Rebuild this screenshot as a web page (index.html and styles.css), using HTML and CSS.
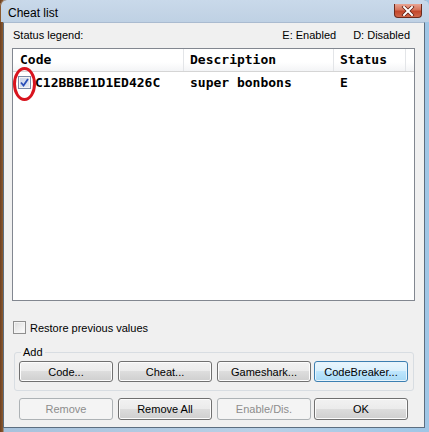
FILE: index.html
```html
<!DOCTYPE html>
<html>
<head>
<meta charset="utf-8">
<link rel="stylesheet" href="styles.css">
</head>
<body>
<div class="window">
  <div class="titlebar">
    <span class="title">Cheat list</span>
    <span class="close">
      <svg width="14" height="10" viewBox="0 0 14 10">
        <path d="M3 1 L11 9 M11 1 L3 9" stroke="#5a1a10" stroke-width="3.4" stroke-linecap="square"/>
        <path d="M3 1 L11 9 M11 1 L3 9" stroke="#ffffff" stroke-width="2" stroke-linecap="square"/>
      </svg>
    </span>
  </div>
  <div class="client">
    <div class="legend">
      <span>Status legend:</span>
      <span class="legend-right"><span>E: Enabled</span><span>D: Disabled</span></span>
    </div>
    <div class="list">
      <div class="list-head">
        <div class="col col-code">Code</div>
        <div class="col col-desc">Description</div>
        <div class="col col-status">Status</div>
        <div class="col col-rest"></div>
      </div>
      <div class="list-row">
        <div class="cell cell-code"><span class="cb checked"><svg width="9" height="9" viewBox="0 0 9 9"><path d="M1 4.5 L3.5 7.5 L8 1" fill="none" stroke="#2a4fb8" stroke-width="1.8"/></svg></span><span>C12BBBE1D1ED426C</span></div>
        <div class="cell cell-desc">super bonbons</div>
        <div class="cell cell-status">E</div>
      </div>
      <div class="mark"></div>
    </div>
    <label class="restore"><span class="cb"></span><span>Restore previous values</span></label>
    <fieldset class="group">
      <legend>Add</legend>
      <div class="btn-row">
        <button class="btn">Code...</button>
        <button class="btn">Cheat...</button>
        <button class="btn">Gameshark...</button>
        <button class="btn btn-focus">CodeBreaker...</button>
      </div>
    </fieldset>
    <div class="btn-row bottom-row">
      <button class="btn" disabled>Remove</button>
      <button class="btn">Remove All</button>
      <button class="btn" disabled>Enable/Dis.</button>
      <button class="btn">OK</button>
    </div>
  </div>
</div>
</body>
</html>
```

FILE: styles.css
```css
html, body {
  margin: 0;
  padding: 0;
  background: #ffffff;
}

.window {
  width: 429px;
  height: 432px;
  box-sizing: border-box;
  display: flex;
  flex-direction: column;
  background: linear-gradient(to right, #6e4020 0px, #8a5a30 3px, #a7c2dc 4px, #b9d0e6 60%, #9fc6e6 100%);
  font-family: "Liberation Sans", Arial, sans-serif;
  color: #000;
}

.titlebar {
  height: 22px;
  display: flex;
  align-items: flex-start;
  background: linear-gradient(to bottom, #c9d9ea 0%, #c3d4e6 60%, #bfd1e4 100%);
  border-radius: 6px 6px 0 0;
  box-shadow: inset 1px 0 0 #8a5a30;
}

.title {
  font-size: 12px;
  padding: 6px 0 0 8px;
  line-height: 14px;
}

.close {
  margin-left: auto;
  margin-right: 7px;
  margin-top: 4px;
  width: 28px;
  height: 14px;
  box-sizing: border-box;
  border: 1px solid #6b2a1c;
  border-top: none;
  border-radius: 0 0 4px 4px;
  background: linear-gradient(to bottom, #e8a493 0%, #d6735b 45%, #c2462a 55%, #d0674a 100%);
  display: flex;
  align-items: center;
  justify-content: center;
}

.client {
  flex: 1;
  margin: 0 4px 4px 3px;
  background: #f0f0f0;
  border: 1px solid #5c6e80;
  border-top: 1px solid #aabbd0;
  display: flex;
  flex-direction: column;
  font-size: 11px;
}

.legend {
  display: flex;
  justify-content: space-between;
  margin-top: 5px;
  padding: 0 14px 0 9px;
  height: 14px;
  line-height: 14px;
}

.legend-right {
  display: flex;
  gap: 17px;
}

.list {
  position: relative;
  margin: 6px 9px 0 8px;
  height: 253px;
  box-sizing: border-box;
  background: #ffffff;
  border: 1px solid #828790;
  font-family: "DejaVu Sans Mono", "Liberation Mono", monospace;
  font-weight: bold;
  font-size: 13px;
}

.list-head {
  display: flex;
  height: 22px;
  border-bottom: 1px solid #d5d5d5;
  background: linear-gradient(to bottom, #ffffff 0%, #ffffff 60%, #f3f4f6 100%);
}

.col {
  line-height: 22px;
  box-sizing: border-box;
  border-right: 1px solid #e3e5e8;
}

.col-code { width: 171px; padding-left: 7px; }
.col-desc { width: 150px; padding-left: 6px; }
.col-status { width: 72px; padding-left: 6px; }
.col-rest { flex: 1; border-right: none; }

.list-row {
  display: flex;
  height: 21px;
  align-items: center;
}

.cell { box-sizing: border-box; white-space: nowrap; }
.cell-code {
  width: 171px;
  padding-left: 5px;
  display: flex;
  align-items: center;
  gap: 4px;
}
.cell-desc { width: 150px; padding-left: 6px; }
.cell-status { padding-left: 6px; }

.cb {
  width: 13px;
  height: 13px;
  box-sizing: border-box;
  border: 1px solid #8f8f8f;
  background: linear-gradient(135deg, #dcdcdc 0%, #f4f4f4 70%, #ffffff 100%);
  box-shadow: inset 0 0 0 1px #f4f4f4;
  display: inline-flex;
  align-items: center;
  justify-content: center;
  flex: none;
}

.cb.checked {
  border-color: #7a8aa5;
  background: linear-gradient(135deg, #c8d2e6 0%, #e6ecf6 100%);
}

.mark {
  position: absolute;
  left: 0px;
  top: 18px;
  width: 23px;
  height: 34px;
  box-sizing: border-box;
  border: 3.5px solid #d8141e;
  border-radius: 50%;
}

.restore {
  display: flex;
  align-items: center;
  gap: 4px;
  margin: 20px 0 0 9px;
  height: 13px;
}

.group {
  margin: 12px 10px 0 10px;
  padding: 3px 4px 8px 4px;
  border: 1px solid #d8dde2;
  border-radius: 3px;
  min-width: 0;
}

.group legend {
  padding: 0 2px;
  margin-left: 2px;
  font-size: 11px;
  line-height: 12px;
}

.btn-row {
  display: flex;
  gap: 5px;
}

.btn-row .btn:last-child {
  margin-left: -2px;
}

.bottom-row {
  margin: 7px 0 0 15px;
}

.bottom-row .btn {
  height: 22px;
}

.btn {
  width: 94px;
  height: 21px;
  box-sizing: border-box;
  padding: 0;
  margin: 0;
  font-family: "Liberation Sans", Arial, sans-serif;
  font-size: 11px;
  color: #000;
  border: 1px solid #707070;
  border-radius: 3px;
  background: linear-gradient(to bottom, #f2f2f2 0%, #ebebeb 50%, #dddddd 50%, #cfcfcf 100%);
  box-shadow: inset 0 0 0 1px #fcfcfc;
}

.btn-focus {
  border-color: #3c7fb1;
  background: linear-gradient(to bottom, #eaf6fd 0%, #d9f0fc 50%, #bee6fd 50%, #a7d9f5 100%);
  box-shadow: inset 0 0 0 1px #e8f4fb;
}

.btn:disabled {
  color: #8d8d8d;
  border-color: #adb2b5;
  background: #f4f4f4;
  box-shadow: none;
}
```
